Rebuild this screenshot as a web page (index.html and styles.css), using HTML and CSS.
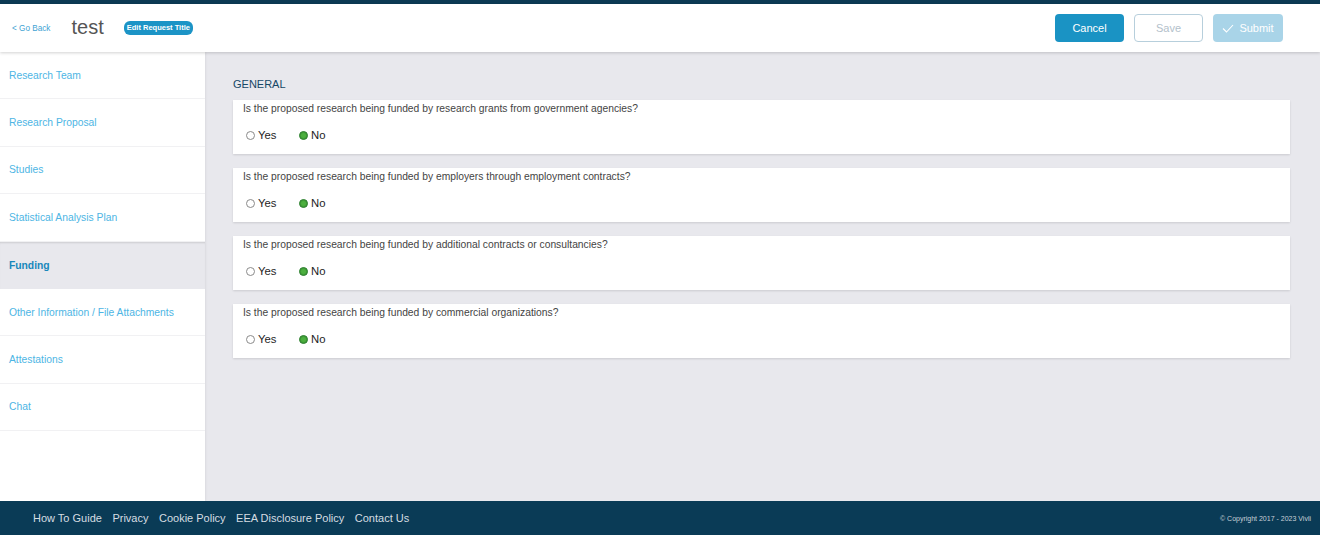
FILE: index.html
```html
<!DOCTYPE html>
<html lang="en">
<head>
  <meta charset="UTF-8">
  <title>Funding</title>
  <link rel="stylesheet" href="styles.css">
</head>
<body>
  <div class="topbar"></div>
  <header class="header">
    <a class="go-back" href="#">&lt; Go Back</a>
    <span class="request-title">test</span>
    <button class="edit-title">Edit Request Title</button>
    <div class="header-actions">
      <button class="btn btn-cancel">Cancel</button>
      <button class="btn btn-save">Save</button>
      <button class="btn btn-submit">
        <svg width="12" height="9" viewBox="0 0 12 9"><path d="M1 4.5 L4.5 8 L11 1" fill="none" stroke="#fff" stroke-width="1.1"/></svg>
        Submit
      </button>
    </div>
  </header>

  <div class="page">
    <nav class="sidebar">
      <a class="nav-item" href="#">Research Team</a>
      <a class="nav-item" href="#">Research Proposal</a>
      <a class="nav-item" href="#">Studies</a>
      <a class="nav-item" href="#">Statistical Analysis Plan</a>
      <a class="nav-item active" href="#">Funding</a>
      <a class="nav-item" href="#">Other Information / File Attachments</a>
      <a class="nav-item" href="#">Attestations</a>
      <a class="nav-item" href="#">Chat</a>
    </nav>

    <main class="content">
      <h3 class="section-title">GENERAL</h3>

      <div class="question">
        <p class="question-text">Is the proposed research being funded by research grants from government agencies?</p>
        <div class="options">
          <label class="option"><span class="radio"></span>Yes</label>
          <label class="option"><span class="radio checked"></span>No</label>
        </div>
      </div>

      <div class="question">
        <p class="question-text">Is the proposed research being funded by employers through employment contracts?</p>
        <div class="options">
          <label class="option"><span class="radio"></span>Yes</label>
          <label class="option"><span class="radio checked"></span>No</label>
        </div>
      </div>

      <div class="question">
        <p class="question-text">Is the proposed research being funded by additional contracts or consultancies?</p>
        <div class="options">
          <label class="option"><span class="radio"></span>Yes</label>
          <label class="option"><span class="radio checked"></span>No</label>
        </div>
      </div>

      <div class="question">
        <p class="question-text">Is the proposed research being funded by commercial organizations?</p>
        <div class="options">
          <label class="option"><span class="radio"></span>Yes</label>
          <label class="option"><span class="radio checked"></span>No</label>
        </div>
      </div>
    </main>
  </div>

  <footer class="footer">
    <div class="footer-links">
      <a href="#">How To Guide</a>
      <a href="#">Privacy</a>
      <a href="#">Cookie Policy</a>
      <a href="#">EEA Disclosure Policy</a>
      <a href="#">Contact Us</a>
    </div>
    <span class="copyright">&copy; Copyright 2017 - 2023 Vivli</span>
  </footer>
</body>
</html>
```

FILE: styles.css
```css
* {
  box-sizing: border-box;
}

html, body {
  margin: 0;
  height: 100%;
}

body {
  font-family: "Liberation Sans", Arial, sans-serif;
  background-color: #e8e8ed;
  display: flex;
  flex-direction: column;
  overflow: hidden;
}

a {
  text-decoration: none;
}

.topbar {
  height: 4px;
  background-color: #0c3a54;
  flex-shrink: 0;
}

.header {
  height: 48px;
  flex-shrink: 0;
  background-color: #fff;
  display: flex;
  align-items: center;
  padding: 0 37px 0 12px;
  box-shadow: 0 1px 3px rgba(0, 0, 0, 0.18);
  position: relative;
  z-index: 2;
}

.go-back {
  font-size: 8.2px;
  color: #3fa3d3;
  margin-right: 21px;
}

.request-title {
  font-size: 20px;
  color: #555;
  margin-right: 20px;
  margin-top: -1px;
}

.edit-title {
  font-family: inherit;
  font-size: 7.5px;
  font-weight: bold;
  color: #fff;
  background-color: #1c94c6;
  border: none;
  border-radius: 6px;
  padding: 3px 3px;
  height: 14px;
  line-height: 8px;
}

.header-actions {
  margin-left: auto;
  display: flex;
  gap: 10px;
}

.btn {
  font-family: inherit;
  font-size: 11px;
  width: 69px;
  height: 28px;
  border-radius: 4px;
  display: flex;
  align-items: center;
  justify-content: center;
  gap: 5px;
}

.btn-cancel {
  background-color: #1a93c4;
  border: none;
  color: #fff;
}

.btn-save {
  background-color: #fff;
  border: 1px solid #b7cfdc;
  color: #b3c1cb;
}

.btn-submit {
  width: 70px;
  background-color: #a9d4e8;
  border: none;
  color: #fff;
}

.page {
  flex: 1;
  display: flex;
  min-height: 0;
}

.sidebar {
  width: 205px;
  flex-shrink: 0;
  background-color: #fff;
  display: flex;
  flex-direction: column;
  box-shadow: 1px 0 2px rgba(0, 0, 0, 0.06);
}

.nav-item {
  height: 47.4px;
  display: flex;
  align-items: center;
  padding-left: 9px;
  font-size: 10.3px;
  color: #4db5e4;
  border-bottom: 1px solid #f1f1f3;
}

.nav-item.active {
  background-color: #e8e8ed;
  color: #1887bb;
  font-weight: bold;
  border-bottom: none;
  box-shadow: inset 0 2px 2px -1px rgba(0, 0, 0, 0.12);
}

.content {
  flex: 1;
  padding: 26px 30px 0 28px;
}

.section-title {
  margin: 0 0 10px;
  font-size: 11px;
  font-weight: normal;
  color: #164766;
}

.question {
  background-color: #fff;
  height: 54px;
  margin-bottom: 14px;
  padding: 3px 10px 0;
  box-shadow: 0 1px 2px rgba(0, 0, 0, 0.12);
}

.question-text {
  margin: 0;
  font-size: 10.3px;
  line-height: 12px;
  color: #444;
}

.options {
  display: flex;
  margin-top: 14px;
}

.option {
  display: flex;
  align-items: center;
  font-size: 11.3px;
  color: #1e1e1e;
  width: 53px;
  padding-left: 3px;
}

.radio {
  width: 9px;
  height: 9px;
  border-radius: 50%;
  border: 1px solid #8a8a8a;
  margin-right: 3px;
  background-color: #fff;
}

.radio.checked {
  border: 1px solid #2e7d32;
  background-color: #4caf3f;
  box-shadow: inset 0 0 0 1px #3f9b35;
}

.footer {
  height: 34px;
  flex-shrink: 0;
  background-color: #0a3b56;
  display: flex;
  align-items: center;
  padding: 0 9px 0 33px;
}

.footer-links {
  display: flex;
  gap: 10.5px;
}

.footer-links a {
  color: #d6dde2;
  font-size: 11px;
}

.copyright {
  margin-left: auto;
  font-size: 7px;
  color: #c8d0d6;
}
```
